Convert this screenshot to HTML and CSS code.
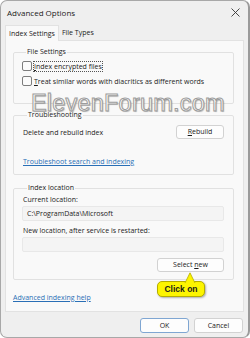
FILE: index.html
```html
<!DOCTYPE html>
<html>
<head>
<meta charset="utf-8">
<link rel="stylesheet" href="styles.css">
</head>
<body>
<div class="window">
  <div class="titlebar">
    <span class="title">Advanced Options</span>
    <svg class="close" width="9" height="9" viewBox="0 0 9 9"><path d="M0.5 0.5L8.5 8.5M8.5 0.5L0.5 8.5" stroke="#333" stroke-width="0.9" fill="none"/></svg>
  </div>
  <div class="tabs">
    <div class="tab active">Index Settings</div>
    <div class="tab">File Types</div>
  </div>
  <div class="panel">
    <fieldset class="group g1">
      <legend>File Settings</legend>
      <div class="check-row"><span class="box"></span><span class="focus"><u>I</u>ndex encrypted files</span></div>
      <div class="check-row"><span class="box"></span><span><u>T</u>reat similar words with diacritics as different words</span></div>
    </fieldset>
    <fieldset class="group g2">
      <legend>Troubleshooting</legend>
      <div class="row-between"><span>Delete and rebuild index</span><button class="btn"><u>R</u>ebuild</button></div>
      <a class="link">Troubleshoot search and indexing</a>
    </fieldset>
    <fieldset class="group g3">
      <legend>Index location</legend>
      <div class="label">Current location:</div>
      <div class="input">C:\ProgramData\Microsoft</div>
      <div class="label l2">New location, after service is restarted:</div>
      <div class="input"></div>
      <div class="btn-row"><button class="btn wide">Select <u>n</u>ew</button></div>
    </fieldset>
    <a class="link help">Advanced indexing help</a>
  </div>
  <div class="footer">
    <button class="btn foot ok">OK</button>
    <button class="btn foot">Cancel</button>
  </div>
  <div class="watermark">ElevenForum.com</div>
  <div class="callout">
    <svg class="pointer" width="14" height="11" viewBox="0 0 14 11"><path d="M2 11L7 0.8L12 11" fill="#fdf500" stroke="#b5ad00" stroke-width="0.8"/></svg>
    <span>Click on</span>
  </div>
</div>
</body>
</html>
```
FILE: styles.css
```css
* { box-sizing: border-box; }
html, body { margin: 0; padding: 0; background: #ffffff; }
body { width: 250px; height: 338px; overflow: hidden; font-family: "Open Sans", "Noto Sans", sans-serif; font-size: 7px; color: #1b1b1b; }
.window {
  position: relative;
  width: 250px; height: 338px;
  background: #efefef;
  border: 1px solid #a8a8a8;
  border-right: 2px solid #9a9a9a;
  border-radius: 7px;
  overflow: hidden;
}
.titlebar {
  height: 23px;
  display: flex; align-items: center; justify-content: space-between;
  padding: 0 8px 0 6px;
}
.title { font-size: 8px; color: #1a1a1a; }
.close { display: block; margin-top: 0; }
.tabs { display: flex; align-items: flex-end; height: 16px; padding-left: 4px; }
.tab { height: 13px; line-height: 12px; padding: 0 3px 0 3px; color: #1a1a1a; }
.tab.active {
  height: 16px; line-height: 16px;
  background: #f9f9f9;
  border: 1px solid #e2e2e2; border-bottom: none;
  padding: 0 3px;
  position: relative; z-index: 1; margin-bottom: -1px;
}
.panel {
  margin-left: 4px; width: 239px; height: 272px;
  background: #f9f9f9;
  border: 1px solid #e2e2e2;
  padding: 6px 9px 0 7px;
}
.group {
  margin: 0; min-width: 0;
  border: 1px solid #e1e1e1; border-radius: 2px;
  padding: 0 9px 0 8px;
}
.group legend { padding: 0 1px; margin-left: 4px; line-height: 10px; font-size: 7px; color: #1b1b1b; }
.g1 { padding-top: 4px; padding-bottom: 17px; }
.check-row { display: flex; align-items: center; gap: 2px; height: 10px; }
.check-row + .check-row { margin-top: 5px; }
.box { width: 10px; height: 10px; border: 1px solid #7d7d7d; border-radius: 2px; background: #fbfbfb; flex: none; }
.focus { outline: 1px dotted #555; outline-offset: 0; line-height: 9px; }
.g2 { margin-top: 6px; padding-top: 5px; padding-bottom: 7px; padding-left: 9px; }
.row-between { display: flex; align-items: center; justify-content: space-between; height: 14px; }
.btn {
  font-family: inherit; font-size: 7px; color: #1b1b1b;
  background: #fdfdfd; border: 1px solid #d2d2d2; border-radius: 3px;
  height: 14px; width: 48px; padding: 0; line-height: 12px;
}
.link { display: block; color: #2a6fb6; text-decoration: underline; line-height: 10px; margin-top: 18px; }
.g3 { margin-top: 8px; padding-top: 2px; padding-bottom: 7px; padding-left: 9px; }
.label { line-height: 10px; }
.label.l2 { margin-top: 5px; }
.input {
  margin-top: 1px; margin-left: -1px; height: 15px; line-height: 14px;
  background: #f4f4f4; border: 1px solid #e8e8e8; border-radius: 2px;
  padding-left: 4px;
}
.btn-row { display: flex; justify-content: flex-end; margin-top: 6px; }
.btn.wide { width: 67px; }
.help { margin-top: 13px; }
.footer { display: flex; justify-content: flex-end; gap: 5px; padding: 6px 5px 0 0; }
.btn.foot { height: 15px; width: 49px; font-size: 7px; }
.btn.ok { border-color: #7fa6d2; }
.watermark {
  position: absolute; left: 30px; top: 94px;
  font-family: "Liberation Sans", Arial, sans-serif; font-size: 23.5px; line-height: 16px;
  color: #ffffff; -webkit-text-stroke: 1px #9c9c9c;
  text-shadow: 1px 1px 1px rgba(0,0,0,0.25);
  letter-spacing: 0.2px;
}
.callout {
  position: absolute; left: 156px; top: 280px;
  width: 48px; height: 16px;
  background: #fdf500; border: 1px solid #b5ad00; border-radius: 5px;
  box-shadow: 1px 1px 2px rgba(0,0,0,0.3);
  display: flex; align-items: center; justify-content: center;
  font-family: "Liberation Sans", Arial, sans-serif; font-weight: bold; font-size: 8.5px; color: #1a1a1a;
}
.pointer { position: absolute; left: 25px; top: -10px; }
```
